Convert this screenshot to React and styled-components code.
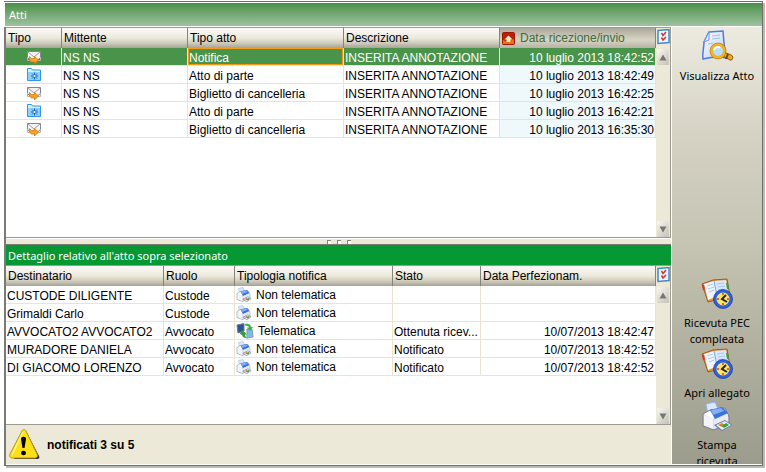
import React, { useState } from 'react';
import styled, { createGlobalStyle } from 'styled-components';

const UI = '"Liberation Sans", Arial, sans-serif';
const HUMAN = '"Noto Sans", "Open Sans", sans-serif';
const BEIGE = '#ece9d8';
const LINE = '#e8e4d0';

const Global = createGlobalStyle`
  * { box-sizing: border-box; }
  body { margin: 0; background: #fff; color: #000; font: 12px/14px ${UI}; }
  button { font: inherit; color: inherit; padding: 0; border: 0; background: none; cursor: pointer; }
  svg { display: block; flex: none; }
`;

const Page = styled.div`
  display: flex;
  min-height: 100vh;
  padding: 1px 3px 7px 4px;
`;

const Frame = styled.div`
  flex: 1;
  min-width: 0;
  display: flex;
  flex-direction: column;
  border: solid #6f6f6a;
  border-width: 1px 1px 1px 0;
  box-shadow: 2px 2px 0 #bdbbaf;
`;

const Title = styled.h1`
  margin: 0;
  height: 25px;
  padding: 0 4px;
  border: solid #fff;
  border-width: 1px 0 1px 1px;
  background: linear-gradient(#4a9049, #9fc2a0);
  color: #fff;
  font: 11px/24px ${HUMAN};
`;

const Body = styled.div`
  flex: 1;
  display: flex;
`;

const Main = styled.main`
  flex: 1;
  min-width: 0;
  display: flex;
  flex-direction: column;
  border-left: 2px solid #7b7b76;
  border-right: 1px solid #fff;
  background: ${BEIGE};
`;

const Pane = styled.section`
  flex: ${(p) => p.$grow} 0 auto;
  min-height: ${(p) => p.$min};
  display: flex;
  border: solid #9d9b91;
  border-width: 1px 1px 1px 0;
  background: #fff;
`;

const TableBox = styled.div`
  flex: 1;
  min-width: 0;
`;

const Table = styled.table`
  width: 100%;
  table-layout: fixed;
  border-collapse: separate;
  border-spacing: 0;
`;

const HeadCell = styled.th`
  height: 20px;
  padding: 0 2px;
  border-right: 1px solid #85837a;
  background: ${(p) =>
    p.$sorted
      ? 'linear-gradient(#a9a798, #d8d5c5 60%, #b5b3a4)'
      : 'linear-gradient(#fbfaf7, #ece9dc 50%, #cfccbc 75%, #a5a395)'};
  color: ${(p) => (p.$sorted ? '#3c6b3c' : '#000')};
  font-weight: normal;
  text-align: left;
  white-space: nowrap;
`;

const SortLabel = styled.span`
  display: flex;
  align-items: center;
  gap: 5px;
`;

const Row = styled.tr`
  background: ${(p) => (p.$selected ? '#4a934a' : '#fff')};
  color: ${(p) => (p.$selected ? '#fff' : '#000')};
`;

const Cell = styled.td`
  height: 18px;
  padding: 3px 1px 0;
  line-height: 14px;
  border: solid ${LINE};
  border-width: 0 1px 1px 0;
  background: ${(p) => (p.$tint ? '#eff9fb' : 'transparent')};
  box-shadow: ${(p) => (p.$focused ? 'inset 0 0 0 1px #f59b12' : 'none')};
  text-align: ${(p) => (p.$right ? 'right' : 'left')};
  white-space: nowrap;
`;

const IconCell = styled(Cell)`
  padding: 0;
  & > svg { margin: 0 auto; }
`;

const KindCell = styled(Cell)`
  padding: 1px 1px 0;
`;

const Kind = styled.span`
  display: flex;
  align-items: center;
  gap: 4px;
  height: 16px;
`;

const Rail = styled.div`
  width: 14px;
  flex: none;
  display: flex;
  flex-direction: column;
  align-items: center;
  background: ${BEIGE};
`;

const ColumnButton = styled.button`
  height: 21px;
  padding-top: 1px;
  display: flex;
`;

const ArrowButton = styled.button`
  width: 12px;
  height: 16px;
  display: grid;
  place-items: center;
  background: linear-gradient(135deg, #f8f7f2, #c4c2b4);
  margin-top: ${(p) => (p.$end ? 'auto' : '0')};
`;

const Splitter = styled.div`
  height: 6px;
  display: flex;
  justify-content: center;
  align-items: center;
  gap: 6px;
  border-top: 1px solid #fff;
`;

const Grip = styled.span`
  width: 4px;
  height: 4px;
  border: solid #85837a;
  border-width: 1px 0 0 1px;
  background: #fff;
`;

const DetailTitle = styled.h2`
  margin: 0;
  height: 21px;
  padding: 0 2px;
  border-top: 1px solid #7b7b76;
  background: #059833;
  color: #fff;
  font: 11px/21px ${HUMAN};
`;

const Status = styled.footer`
  flex: none;
  height: 40px;
  padding: 0 3px;
  display: flex;
  align-items: center;
  gap: 7px;
  border-bottom: 1px solid #fff;
  font-weight: bold;
`;

const Sidebar = styled.aside`
  flex: none;
  width: 90px;
  display: flex;
  flex-direction: column;
  justify-content: space-between;
  border-bottom: 1px solid #fff;
  background: linear-gradient(#edeae0, #d5d2c4 25%, #c5c3b2 50%, #9b9c8c);
`;

const ActionGroup = styled.div`
  display: flex;
  flex-direction: column;
  align-items: center;
  gap: 1px;
  max-height: 186px;
  padding-top: ${(p) => (p.$first ? '2px' : '0')};
  overflow: hidden;
`;

const Action = styled.button`
  flex: none;
  width: 80px;
  display: flex;
  flex-direction: column;
  align-items: center;
  gap: 5px;
  font: 11px/16px ${HUMAN};
`;

const ActionText = styled.span`
  white-space: ${(p) => (p.$nowrap ? 'nowrap' : 'normal')};
`;

function MailIcon() {
  return (
    <svg width="16" height="16" viewBox="0 0 16 16" aria-label="Notifica">
      <path d="M1.5 2.5h13v6l-4 3.5h-5l-4-3.500z" fill="#f4f4f4" stroke="#858585" />
      <path d="M2 3l6 5 6-5" fill="none" stroke="#a0a0a0" />
      <path d="M1.500 8v3.500h3M14.500 8v3.500h-3" fill="none" stroke="#b5b5b5" />
      <path d="M3.500 7.500l2 2h3V7.500l4 3.500-4 4v-2H5.500c-2-1-2.500-3-2-5.500z" fill="#f9a326" stroke="#cf7610" strokeWidth=".8" />
    </svg>
  );
}

function FolderIcon() {
  return (
    <svg width="16" height="16" viewBox="0 0 16 16" aria-label="Atto di parte">
      <path d="M1.500 3V1.500h4l1 1.500h8v10.500h-13z" fill="#d3eeff" stroke="#2f97e8" />
      <rect x="2" y="5" width="12" height="8" fill="#8fd0fb" />
      <path d="M8.500 5.500v7M5 9h7M6 6.500l5 5M11 6.500l-5 5" stroke="#0f62cf" />
      <circle cx="8.500" cy="9" r="1" fill="#fff" />
    </svg>
  );
}

function SortIcon() {
  return (
    <svg width="13" height="13" viewBox="0 0 13 13" aria-hidden="true">
      <rect x=".5" y=".5" width="12" height="12" rx="1" fill="#b82008" stroke="#a01604" />
      <path d="M1 12V8l5 2 6-3v5z" fill="#e8720c" />
      <path d="M6.500 3.500l4 4h-2v2.500h-4V7.500h-2z" fill="#fff3ba" />
    </svg>
  );
}

function ColumnsIcon() {
  return (
    <svg width="13" height="16" viewBox="0 0 13 16" aria-hidden="true">
      <path d="M1 1.500l11-1v13l-11 1z" fill="#f0f5fb" stroke="#3c8cc8" strokeWidth="1.500" />
      <path d="M4.500 4l1.500 2.500L9 3M4.500 8.500L6 11l3-3" fill="none" stroke="#d62f2f" strokeWidth="1.500" />
    </svg>
  );
}

function Arrow({ down }) {
  return (
    <svg width="8" height="7" viewBox="0 0 8 7" aria-hidden="true">
      <path d={down ? 'M.5 .5h7L4 6.500z' : 'M.5 6.500h7L4 .5z'} fill="#77766f" />
    </svg>
  );
}

function PrinterIcon({ size = 16, height = size }) {
  return (
    <svg width={size} height={height} viewBox="0 0 32 30" aria-hidden="true">
      <path d="M5 2l9-2 4 9-11 4z" fill="#d9e8ff" stroke="#8fb4ea" />
      <path d="M2 12l7-4 15-2 4 9v6l-15 7-11-4z" fill="#d9dbe8" stroke="#777b92" />
      <path d="M3 13l9 4v10l-9-4z" fill="#f3f4fa" />
      <path d="M3 12l6-3 4 5-1 3z" fill="#fff" />
      <path d="M9 8l12-3 6 6-13 6z" fill="#3a72dc" />
      <path d="M10 8l10-2 3 3-11 4z" fill="#84aff7" />
      <path d="M13 18l14-6v7l-14 7z" fill="#e9ebf4" />
      <path d="M13 23l11-5 7 5-10 6z" fill="#64779a" />
      <path d="M15 23l9-4 6 4-9 5z" fill="#e3efff" />
      <path d="M17 23l4-2 3 2-3 2z" fill="#e77a23" />
      <path d="M21 24l4-3 3 2-5 3z" fill="#2fa53e" />
    </svg>
  );
}

function NetworkIcon() {
  return (
    <svg width="18" height="16" viewBox="0 0 18 16" aria-hidden="true">
      <path d="M1 2l7-1.500V8L2 10z" fill="#2c5590" stroke="#6b7c98" />
      <path d="M4 10l5-1 1 2-5 1z" fill="#7b8798" />
      <path d="M11 6l5 0 1 8-6 1z" fill="#7dbcf2" stroke="#8495a8" />
      <path d="M9 1c4-1 6 1 6 3h2l-3 4-3-3.500h2c0-1-1-2-4-2z" fill="#38b441" />
      <path d="M6 7l-2 4h2c0 3 2 4 6 4.500-2-1-3-2-3-4h2z" fill="#2da437" />
    </svg>
  );
}

function DocumentSearchIcon() {
  return (
    <svg width="34" height="34" viewBox="0 0 34 34" aria-hidden="true">
      <defs>
        <linearGradient id="paper" x1="0" y1="0" x2="1" y2="1">
          <stop offset="0" stopColor="#fff" />
          <stop offset="1" stopColor="#b4cef8" />
        </linearGradient>
      </defs>
      <path d="M9 3l14-1 1 12 2 15c-7-2-15-1-23 1-1-6 1-11 1-17z" fill="url(#paper)" stroke="#5278e2" strokeWidth="1.500" />
      <path d="M9 3v8l-5 2z" fill="#e9f1ff" stroke="#6c8eed" />
      <path d="M12 7l8-1M12 10l8-1M8 15l5-1" stroke="#a3bcf0" />
      <path d="M24 23l7 3c3 1 2 6-1 5l-7-4z" fill="#edaa20" stroke="#8f560e" />
      <path d="M28 25l-2 5" stroke="#754208" strokeWidth="2" />
      <circle cx="18" cy="22" r="6.500" fill="#b5dffd" stroke="#f2b31e" strokeWidth="3" />
      <circle cx="18" cy="22" r="8" fill="none" stroke="#bd7910" strokeWidth=".7" />
      <path d="M14 21c1-3 4-4 6-2" stroke="#fff" strokeWidth="2" fill="none" />
    </svg>
  );
}

function BookClockIcon() {
  return (
    <svg width="32" height="32" viewBox="0 0 32 32" aria-hidden="true">
      <path d="M1 6l11-4 14-1 3 17-22 6z" fill="#e39a3a" stroke="#a65a17" />
      <path d="M3 6l10-3 3 15-9 4z" fill="#eef5ff" />
      <path d="M13 3l12-1 3 14-12 2z" fill="#d7e7ff" />
      <path d="M13 3l3 15" stroke="#7ea7df" />
      <path d="M6 8l6-2M7 11l6-2M8 14l5-2M16 6l7-1M17 9l7-1M17 12l5-1" stroke="#a9c6f5" />
      <path d="M26 5l1 6" stroke="#36a23b" strokeWidth="2" />
      <path d="M2 7l1 5" stroke="#dd322a" strokeWidth="2" />
      <circle cx="22" cy="21" r="8" fill="#fce46b" stroke="#2e62dc" strokeWidth="3" />
      <circle cx="22" cy="21" r="9.500" fill="none" stroke="#173894" strokeWidth=".7" />
      <path d="M22 15v2M22 25v2M16 21h2M26 21h2" stroke="#e5651b" strokeWidth="2" />
      <path d="M25 17l-4 4 5 3" fill="none" stroke="#252525" strokeWidth="2" />
    </svg>
  );
}

function WarningIcon() {
  return (
    <svg width="31" height="31" viewBox="0 0 31 31" aria-hidden="true">
      <path d="M17 2l13 25c1 2 0 3-2 3H5z" fill="#29294f" />
      <path d="M13 2c1-2 3-2 4 0l11 23c1 2 0 4-2 4H3c-2 0-3-2-2-4z" fill="#ffdf16" stroke="#b99a0a" />
      <path d="M14 3L3 26" stroke="#fff48a" strokeWidth="1.500" />
      <path d="M12 10c0-3 5-3 5 0l-1.500 9h-2z" fill="#000" />
      <ellipse cx="14.500" cy="24" rx="2.500" ry="2.300" fill="#000" />
    </svg>
  );
}

const acts = [
  ['mail', 'Notifica', '10 luglio 2013 18:42:52'],
  ['folder', 'Atto di parte', '10 luglio 2013 18:42:49'],
  ['mail', 'Biglietto di cancelleria', '10 luglio 2013 16:42:25'],
  ['folder', 'Atto di parte', '10 luglio 2013 16:42:21'],
  ['mail', 'Biglietto di cancelleria', '10 luglio 2013 16:35:30'],
];

const recipients = [
  ['CUSTODE DILIGENTE', 'Custode', 'Non telematica', '', ''],
  ['Grimaldi Carlo', 'Custode', 'Non telematica', '', ''],
  ['AVVOCATO2 AVVOCATO2', 'Avvocato', 'Telematica', 'Ottenuta ricev...', '10/07/2013 18:42:47'],
  ['MURADORE DANIELA', 'Avvocato', 'Non telematica', 'Notificato', '10/07/2013 18:42:52'],
  ['DI GIACOMO LORENZO', 'Avvocato', 'Non telematica', 'Notificato', '10/07/2013 18:42:52'],
];

function ScrollRail() {
  return (
    <Rail>
      <ColumnButton type="button" aria-label="Scegli colonne"><ColumnsIcon /></ColumnButton>
      <ArrowButton type="button" aria-label="Scorri in alto"><Arrow /></ArrowButton>
      <ArrowButton type="button" aria-label="Scorri in basso" $end><Arrow down /></ArrowButton>
    </Rail>
  );
}

export default function App() {
  const [selected, setSelected] = useState(0);
  return (
    <Page>
      <Global />
      <Frame>
        <Title>Atti</Title>
        <Body>
          <Main>
            <Pane $grow={1} $min="211px">
              <TableBox>
                <Table>
                  <colgroup>
                    <col width="56" /><col width="126" /><col width="156" /><col width="156" /><col />
                  </colgroup>
                  <thead>
                    <tr>
                      <HeadCell>Tipo</HeadCell>
                      <HeadCell>Mittente</HeadCell>
                      <HeadCell>Tipo atto</HeadCell>
                      <HeadCell>Descrizione</HeadCell>
                      <HeadCell $sorted aria-sort="descending">
                        <SortLabel><SortIcon />Data ricezione/invio</SortLabel>
                      </HeadCell>
                    </tr>
                  </thead>
                  <tbody>
                    {acts.map(([icon, type, date], i) => (
                      <Row key={date} $selected={i === selected} onClick={() => setSelected(i)}>
                        <IconCell>{icon === 'mail' ? <MailIcon /> : <FolderIcon />}</IconCell>
                        <Cell>NS NS</Cell>
                        <Cell $focused={i === selected}>{type}</Cell>
                        <Cell>INSERITA ANNOTAZIONE</Cell>
                        <Cell $right $tint={i !== selected}>{date}</Cell>
                      </Row>
                    ))}
                  </tbody>
                </Table>
              </TableBox>
              <ScrollRail />
            </Pane>
            <Splitter><Grip /><Grip /><Grip /></Splitter>
            <DetailTitle>Dettaglio relativo all'atto sopra selezionato</DetailTitle>
            <Pane $grow={0} $min="160px">
              <TableBox>
                <Table>
                  <colgroup>
                    <col width="158" /><col width="71" /><col width="158" /><col width="88" /><col />
                  </colgroup>
                  <thead>
                    <tr>
                      <HeadCell>Destinatario</HeadCell>
                      <HeadCell>Ruolo</HeadCell>
                      <HeadCell>Tipologia notifica</HeadCell>
                      <HeadCell>Stato</HeadCell>
                      <HeadCell>Data Perfezionam.</HeadCell>
                    </tr>
                  </thead>
                  <tbody>
                    {recipients.map(([name, role, kind, state, date]) => (
                      <Row key={name}>
                        <Cell>{name}</Cell>
                        <Cell>{role}</Cell>
                        <KindCell>
                          <Kind>{kind === 'Telematica' ? <NetworkIcon /> : <PrinterIcon />}{kind}</Kind>
                        </KindCell>
                        <Cell>{state}</Cell>
                        <Cell $right>{date}</Cell>
                      </Row>
                    ))}
                  </tbody>
                </Table>
              </TableBox>
              <ScrollRail />
            </Pane>
            <Status><WarningIcon />notificati 3 su 5</Status>
          </Main>
          <Sidebar>
            <ActionGroup $first>
              <Action type="button"><DocumentSearchIcon /><ActionText $nowrap>Visualizza Atto</ActionText></Action>
            </ActionGroup>
            <ActionGroup>
              <Action type="button"><BookClockIcon /><ActionText>Ricevuta PEC compleata</ActionText></Action>
              <Action type="button"><BookClockIcon /><ActionText $nowrap>Apri allegato</ActionText></Action>
              <Action type="button"><PrinterIcon size={32} height={30} /><ActionText>Stampa<br />ricevuta</ActionText></Action>
            </ActionGroup>
          </Sidebar>
        </Body>
      </Frame>
    </Page>
  );
}
